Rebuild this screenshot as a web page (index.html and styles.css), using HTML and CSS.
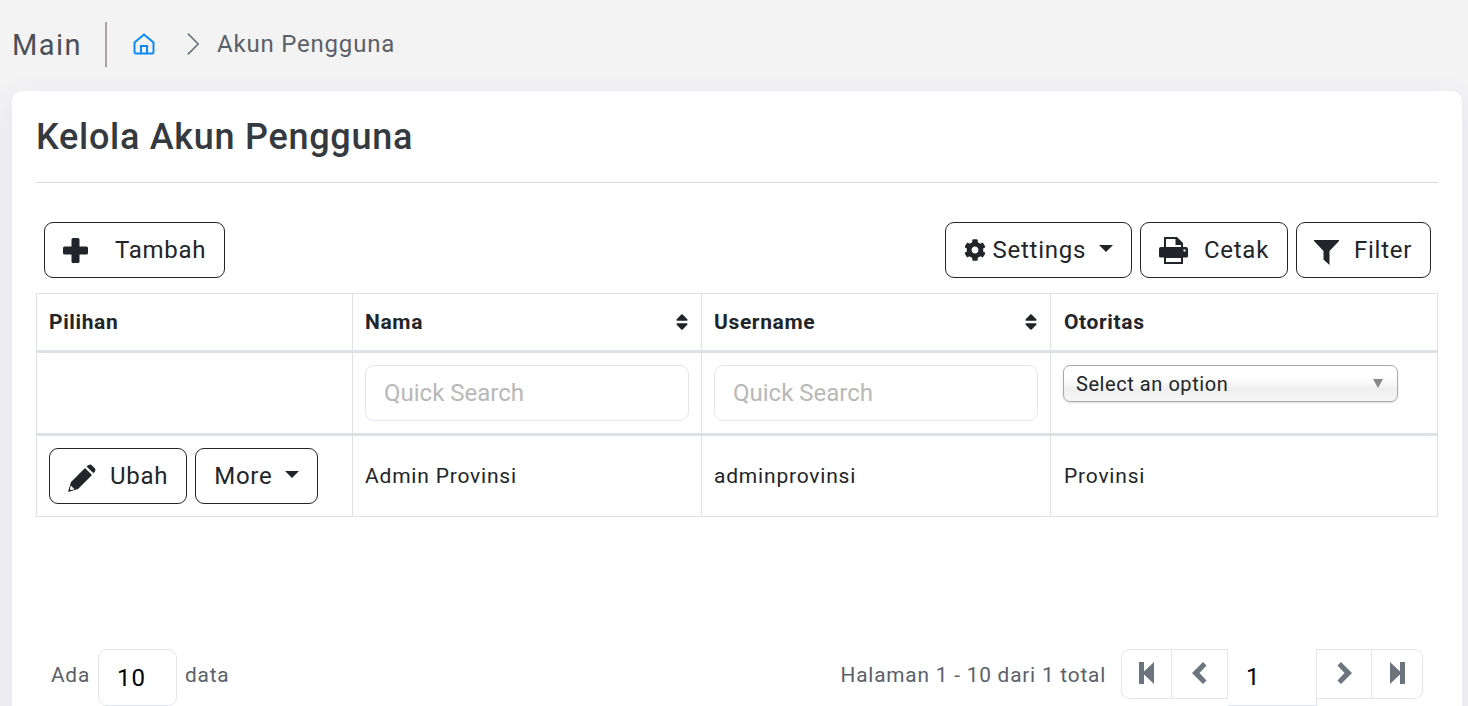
FILE: index.html
```html
<!DOCTYPE html>
<html lang="id">
<head>
    <meta charset="UTF-8">
    <meta name="viewport" content="width=device-width, initial-scale=1.0">
    <title>Kelola Akun Pengguna</title>
    <link rel="stylesheet" href="styles.css">
</head>
<body>
    <div class="subheader">
        <h5 class="subheader-title">Main</h5>
        <div class="subheader-sep"></div>
        <svg class="home-icon" viewBox="0 0 24 24"><path d="M2.5 10.5 12 2.5l9.5 8V20a1.5 1.5 0 0 1-1.5 1.5H4A1.5 1.5 0 0 1 2.5 20zM9 21.5V14h6v7.5"/></svg>
        <svg class="crumb-icon" viewBox="0 0 16 28"><path d="M2 2l12 12L2 26"/></svg>
        <span class="crumb">Akun Pengguna</span>
    </div>

    <div class="card">
        <h3 class="card-title">Kelola Akun Pengguna</h3>
        <div class="card-body">
            <div class="toolbar">
                <button class="btn btn-tambah">
                    <svg class="ico ico-plus" viewBox="0 0 25 25"><path d="M10 0h5a1.5 1.5 0 0 1 1.5 1.5v7h7a1.5 1.5 0 0 1 1.5 1.5v5a1.5 1.5 0 0 1-1.5 1.5h-7v7a1.5 1.5 0 0 1-1.5 1.5h-5a1.5 1.5 0 0 1-1.5-1.5v-7h-7A1.5 1.5 0 0 1 0 15v-5a1.5 1.5 0 0 1 1.5-1.5h7v-7A1.5 1.5 0 0 1 10 0z"/></svg>
                    Tambah
                </button>
                <div class="toolbar-right">
                    <button class="btn btn-settings">
                        <svg class="ico ico-cog" viewBox="0 0 512 512"><path d="M487.4 315.7l-42.6-24.6c4.3-23.2 4.3-47 0-70.2l42.6-24.6c4.9-2.8 7.1-8.6 5.5-14-11.1-35.6-30-67.8-54.7-94.6-3.8-4.1-10-5.1-14.8-2.3L380.8 110c-17.9-15.4-38.5-27.3-60.8-35.1V25.8c0-5.6-3.9-10.5-9.4-11.7-36.7-8.2-74.3-7.8-109.2 0-5.5 1.2-9.4 6.1-9.4 11.7V75c-22.2 7.9-42.8 19.8-60.8 35.1L88.7 85.5c-4.9-2.8-11-1.9-14.8 2.3-24.7 26.7-43.6 58.9-54.7 94.6-1.7 5.4.6 11.2 5.5 14L67.3 221c-4.3 23.2-4.3 47 0 70.2l-42.6 24.6c-4.9 2.8-7.1 8.6-5.5 14 11.1 35.6 30 67.8 54.7 94.6 3.8 4.1 10 5.1 14.8 2.3l42.6-24.6c17.9 15.4 38.5 27.3 60.8 35.1v49.2c0 5.6 3.9 10.5 9.4 11.7 36.7 8.2 74.3 7.8 109.2 0 5.5-1.2 9.4-6.1 9.4-11.7v-49.2c22.2-7.9 42.8-19.8 60.8-35.1l42.6 24.6c4.9 2.8 11 1.9 14.8-2.3 24.7-26.7 43.6-58.9 54.7-94.6 1.5-5.5-.7-11.3-5.6-14.1zM256 336c-44.1 0-80-35.9-80-80s35.9-80 80-80 80 35.9 80 80-35.9 80-80 80z"/></svg>
                        Settings
                        <span class="caret"></span>
                    </button>
                    <button class="btn btn-cetak">
                        <svg class="ico ico-print" viewBox="0 0 29 27"><path fill-rule="evenodd" d="M5 0H18L24 6V10H27a2 2 0 0 1 2 2V19a1.5 1.5 0 0 1-1.5 1.5H24V27H5V20.5H1.5A1.5 1.5 0 0 1 0 19V12a2 2 0 0 1 2-2H5ZM7 2V10H22V8H16.5V2ZM7 21V25H22V21ZM24.5 12.5v2h2v-2Z"/></svg>
                        Cetak
                    </button>
                    <button class="btn btn-filter">
                        <svg class="ico ico-filter" viewBox="0 0 25 25"><path d="M0 0H25V1L15.5 11V25L9.5 19.5V11L0 1Z"/></svg>
                        Filter
                    </button>
                </div>
            </div>

            <table class="data-table">
                <colgroup>
                    <col class="col-pilihan">
                    <col class="col-nama">
                    <col class="col-username">
                    <col class="col-otoritas">
                </colgroup>
                <thead>
                    <tr class="head-row">
                        <th>Pilihan</th>
                        <th>
                            <div class="th-sort">Nama
                                <svg class="ico-sort" viewBox="0 0 320 512"><path d="M41 288h238c21.4 0 32.1 25.9 17 41L177 448c-9.4 9.4-24.6 9.4-33.9 0L24 329c-15.1-15.1-4.4-41 17-41zm255-105L177 64c-9.4-9.4-24.6-9.4-33.9 0L24 183c-15.1 15.1-4.4 41 17 41h238c21.4 0 32.1-25.9 17-41z"/></svg>
                            </div>
                        </th>
                        <th>
                            <div class="th-sort">Username
                                <svg class="ico-sort" viewBox="0 0 320 512"><path d="M41 288h238c21.4 0 32.1 25.9 17 41L177 448c-9.4 9.4-24.6 9.4-33.9 0L24 329c-15.1-15.1-4.4-41 17-41zm255-105L177 64c-9.4-9.4-24.6-9.4-33.9 0L24 183c-15.1 15.1-4.4 41 17 41h238c21.4 0 32.1-25.9 17-41z"/></svg>
                            </div>
                        </th>
                        <th>Otoritas</th>
                    </tr>
                    <tr class="search-row">
                        <th></th>
                        <th><input class="quick-search" type="text" placeholder="Quick Search"></th>
                        <th><input class="quick-search" type="text" placeholder="Quick Search"></th>
                        <th>
                            <div class="select-box">
                                <span>Select an option</span>
                                <span class="select-arrow"></span>
                            </div>
                        </th>
                    </tr>
                </thead>
                <tbody>
                    <tr class="data-row">
                        <td>
                            <div class="row-actions">
                                <button class="btn btn-ubah">
                                    <svg class="ico ico-pencil" viewBox="0 0 28 28"><path fill-rule="evenodd" d="M3 18 17 4l7 7-14 14-10 3ZM2.8 21.5 2 25.2 3 26 6.5 25.2ZM18.6 2.6 20.5.9Q22 0 23.2.7L27 4.5Q27.8 6 27 7.4L25.4 9.2Z"/></svg>
                                    Ubah
                                </button>
                                <button class="btn btn-more">More <span class="caret"></span></button>
                            </div>
                        </td>
                        <td>Admin Provinsi</td>
                        <td>adminprovinsi</td>
                        <td>Provinsi</td>
                    </tr>
                </tbody>
            </table>

            <div class="table-footer">
                <div class="page-size">
                    <span class="footer-text">Ada</span>
                    <input class="page-size-input" type="text" value="10">
                    <span class="footer-text">data</span>
                </div>
                <div class="page-nav">
                    <span class="footer-text page-info">Halaman 1 - 10 dari 1 total</span>
                    <div class="pager">
                        <a class="pager-btn pager-first"><svg class="ico-pager" viewBox="0 0 15 22"><path d="M0 0h5v9.5L15 0v22L5 12.5V22H0z"/></svg></a>
                        <a class="pager-btn pager-prev"><svg class="ico-pager" viewBox="0 0 15 22"><path d="M11 0l3.5 3.5L7.5 11l7 7.5L11 22 0 11z"/></svg></a>
                        <input class="pager-input" type="text" value="1">
                        <a class="pager-btn pager-next"><svg class="ico-pager" viewBox="0 0 15 22"><path d="M4 0L.5 3.5 7.5 11l-7 7.5L4 22 15 11z"/></svg></a>
                        <a class="pager-btn pager-last"><svg class="ico-pager" viewBox="0 0 15 22"><path d="M15 0h-5v9.5L0 0v22l10-9.5V22h5z"/></svg></a>
                    </div>
                </div>
            </div>
        </div>
    </div>
</body>
</html>
```

FILE: styles.css
```css
* {
    box-sizing: border-box;
}
html, body {
    height: 100%;
}
body {
    margin: 0;
    overflow: hidden;
    background: #f3f3f4;
    color: #212529;
    font-family: Roboto, sans-serif;
    letter-spacing: 0.05em;
}
.subheader {
    display: flex;
    align-items: center;
    height: 91px;
    padding: 0 0 3px 12px;
}
.subheader-title {
    margin: 0;
    padding-top: 2px;
    padding-right: 23px;
    color: #495057;
    font-size: 29px;
    font-weight: 400;
    letter-spacing: 0.05em;
}
.subheader-sep {
    width: 2px;
    height: 45px;
    background: #a8a3a3;
}
.home-icon {
    width: 24px;
    height: 24px;
    margin-left: 25px;
    fill: none;
    stroke: #0d8bf2;
    stroke-width: 2;
}
.crumb-icon {
    width: 14px;
    height: 24px;
    margin-left: 30px;
    fill: none;
    stroke: #6c757d;
    stroke-width: 2;
}
.crumb {
    margin-left: 17px;
    color: #5a5f69;
    font-size: 24px;
}
.card {
    margin: 0 6px 0 12px;
    padding: 0 24px;
    min-height: 700px;
    background: #fff;
    border-radius: 10px;
    box-shadow: 0 10px 30px 0 rgba(65, 69, 180, 0.1);
}
.card-title {
    margin: 0;
    height: 92px;
    padding-top: 25px;
    color: #343a40;
    font-size: 36px;
    font-weight: 500;
    line-height: 42px;
    letter-spacing: 0.02em;
    border-bottom: 1px solid #d8d8d8;
}
.card-body {
    padding-top: 39px;
}
.toolbar {
    display: flex;
    justify-content: space-between;
    padding: 0 7px 0 8px;
    margin-bottom: 15px;
}
.toolbar-right {
    display: flex;
    gap: 8px;
}
.btn {
    display: inline-flex;
    align-items: center;
    height: 56px;
    padding: 0 18px;
    background: #fff;
    border: 1px solid #212529;
    border-radius: 9px;
    color: #212529;
    font-family: inherit;
    font-size: 24px;
    letter-spacing: 0.03em;
}
.ico {
    fill: #212529;
    flex: none;
}
.ico-plus {
    width: 25px;
    height: 25px;
    margin-right: 27px;
}
.ico-cog {
    width: 22px;
    height: 22px;
    margin-right: 7px;
}
.ico-print {
    width: 29px;
    height: 27px;
    margin-right: 16px;
}
.btn-filter {
    padding: 0 18px 0 17px;
}
.ico-filter {
    width: 25px;
    height: 25px;
    margin-top: 5px;
    margin-right: 15px;
}
.ico-pencil {
    width: 28px;
    height: 28px;
    margin-top: 3px;
    margin-right: 14px;
}
.caret {
    display: inline-block;
    margin-left: 13px;
    margin-bottom: 4px;
    border-top: 7px solid #212529;
    border-left: 7px solid transparent;
    border-right: 7px solid transparent;
}
.data-table {
    width: 1402px;
    table-layout: fixed;
    border-collapse: collapse;
    font-size: 21px;
}
.col-pilihan {
    width: 316px;
}
.col-nama, .col-username {
    width: 349px;
}
.data-table th, .data-table td {
    padding: 12px;
    border: 1px solid #dee2e6;
    vertical-align: middle;
    text-align: left;
}
.data-table th {
    font-weight: 700;
    letter-spacing: 0.03em;
}
.head-row th {
    height: 58px;
    border-bottom-width: 3px;
}
.head-row th:last-child, .data-row td:last-child {
    padding-left: 13px;
}
.search-row th {
    height: 83px;
    border-bottom-width: 3px;
    vertical-align: top;
}
.data-row td {
    height: 81px;
}
.th-sort {
    display: flex;
    justify-content: space-between;
    align-items: center;
}
.ico-sort {
    width: 14px;
    height: 20px;
    fill: #212529;
}
.quick-search {
    display: block;
    width: 100%;
    height: 56px;
    padding: 0 18px;
    border: 1px solid #e4e6ef;
    border-radius: 9px;
    font-family: inherit;
    font-size: 24px;
    letter-spacing: 0;
}
.quick-search::placeholder {
    color: #b8b8b8;
}
.select-box {
    display: flex;
    justify-content: space-between;
    align-items: center;
    width: 335px;
    height: 37px;
    padding: 0 14px 0 12px;
    background: linear-gradient(to bottom, #fff 30%, #f8f8f8 50%, #eee 65%, #f6f6f6 100%);
    border: 1px solid #aaa;
    border-radius: 7px;
    font-size: 20px;
    font-weight: 400;
    letter-spacing: 0.028em;
    box-shadow: 0 1px 2px rgba(0, 0, 0, 0.15);
}
.select-arrow {
    border-top: 9px solid #888;
    border-left: 5px solid transparent;
    border-right: 5px solid transparent;
}
.row-actions {
    display: flex;
    gap: 8px;
}
.table-footer {
    display: flex;
    justify-content: space-between;
    align-items: flex-start;
    margin-top: 132px;
    padding: 0 15px;
    color: #5a5f69;
    font-size: 20.8px;
}
.page-size, .page-nav {
    display: flex;
    align-items: center;
}
.footer-text {
    margin-bottom: 6px;
}
.page-size-input {
    width: 79px;
    height: 57px;
    margin: 0 8px;
    padding: 0 18px;
    border: 1px solid #e4e6ef;
    border-radius: 9px;
    font-family: inherit;
    font-size: 24px;
    letter-spacing: 0.04em;
}
.page-nav {
    height: 57px;
}
.page-info {
    margin-right: 15px;
}
.pager {
    display: flex;
    align-items: flex-start;
    height: 57px;
}
.pager-btn {
    display: flex;
    align-items: center;
    justify-content: center;
    height: 50px;
    border: 1px solid #e4e6ef;
    border-left: 0;
    padding-bottom: 2px;
}
.pager-first {
    width: 51px;
    border-left: 1px solid #e4e6ef;
    border-radius: 9px 0 0 9px;
}
.pager-prev {
    width: 56px;
}
.pager-next {
    width: 55px;
}
.pager-last {
    width: 51px;
    border-radius: 0 9px 9px 0;
}
.ico-pager {
    width: 15px;
    height: 22px;
    fill: #6c757d;
}
.pager-input {
    width: 89px;
    height: 57px;
    padding: 0 18px;
    border: 1px solid #e4e6ef;
    border-left: 0;
    border-top: 0;
    font-family: inherit;
    font-size: 24px;
}
```
